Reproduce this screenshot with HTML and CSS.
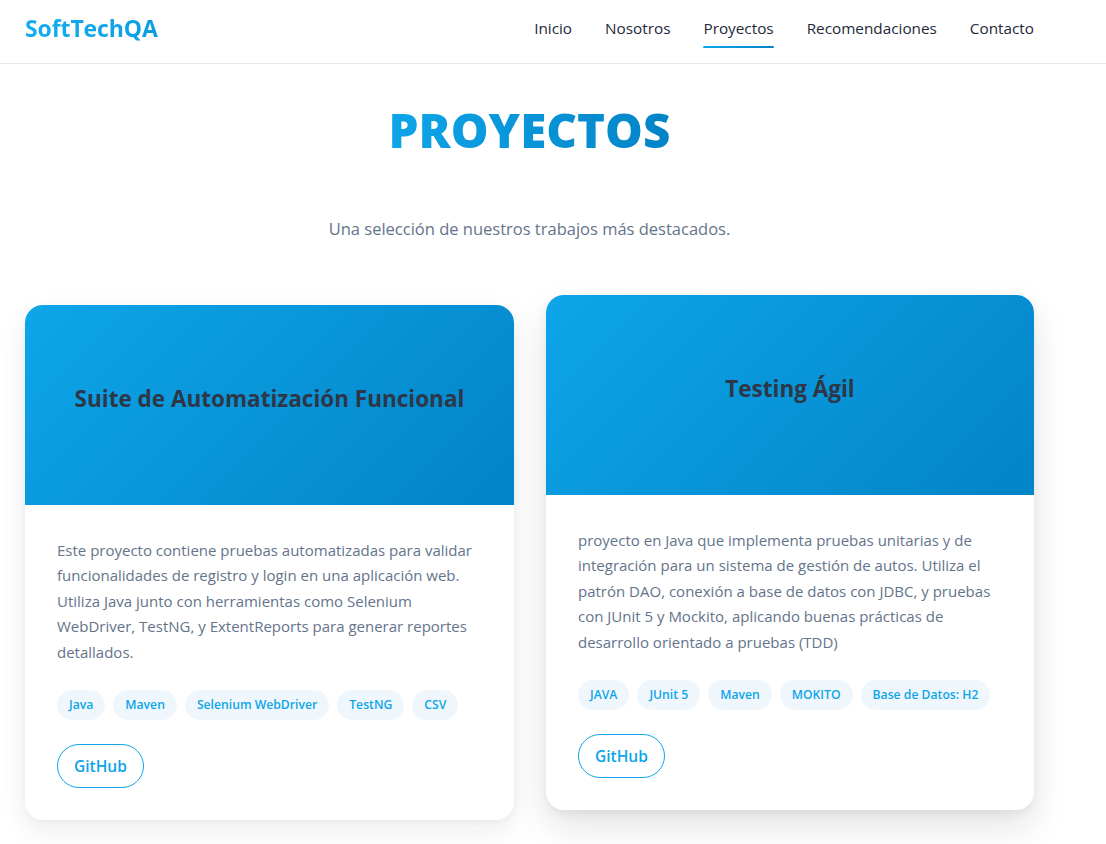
FILE: index.html
```html
<!DOCTYPE html>
<html lang="es">
<head>
<meta charset="utf-8">
<title>SoftTechQA - Proyectos</title>
<link rel="stylesheet" href="styles.css">
</head>
<body>
<header class="site-header">
  <div class="container header-inner">
    <a class="logo" href="#">SoftTechQA</a>
    <nav class="nav">
      <a href="#">Inicio</a>
      <a href="#">Nosotros</a>
      <a href="#" class="active">Proyectos</a>
      <a href="#">Recomendaciones</a>
      <a href="#">Contacto</a>
    </nav>
  </div>
</header>
<main class="container projects">
  <h1 class="section-title">PROYECTOS</h1>
  <p class="section-subtitle">Una selección de nuestros trabajos más destacados.</p>
  <div class="grid">
    <article class="card">
      <div class="card-head"><h3>Suite de Automatización Funcional</h3></div>
      <div class="card-body">
        <p>Este proyecto contiene pruebas automatizadas para validar funcionalidades de registro y login en una aplicación web. Utiliza Java junto con herramientas como Selenium WebDriver, TestNG, y ExtentReports para generar reportes detallados.</p>
        <ul class="tags">
          <li>Java</li><li>Maven</li><li>Selenium WebDriver</li><li>TestNG</li><li>CSV</li>
        </ul>
        <a href="#" class="btn">GitHub</a>
      </div>
    </article>
    <article class="card card-raised">
      <div class="card-head"><h3>Testing Ágil</h3></div>
      <div class="card-body">
        <p>proyecto en Java que implementa pruebas unitarias y de integración para un sistema de gestión de autos. Utiliza el patrón DAO, conexión a base de datos con JDBC, y pruebas con JUnit 5 y Mockito, aplicando buenas prácticas de desarrollo orientado a pruebas (TDD)</p>
        <ul class="tags">
          <li>JAVA</li><li>JUnit 5</li><li>Maven</li><li>MOKITO</li><li>Base de Datos: H2</li>
        </ul>
        <a href="#" class="btn">GitHub</a>
      </div>
    </article>
  </div>
</main>
</body>
</html>
```
FILE: styles.css
```css
* { box-sizing: border-box; }
html, body { margin: 0; padding: 0; }
body {
  font-family: "Open Sans", "Noto Sans", sans-serif;
  background: #ffffff;
  color: #1e293b;
}
.container {
  width: 1009px;
  margin-left: 25px;
}
.site-header {
  border-bottom: 1px solid #e5e7eb;
  height: 64px;
}
.header-inner {
  height: 63px;
  padding-bottom: 7px;
  display: flex;
  align-items: center;
  justify-content: space-between;
}
.logo {
  font-size: 23px;
  font-weight: 700;
  text-decoration: none;
  color: #0ea5e9;
  background: linear-gradient(90deg, #14aef0, #0a9ee3);
  -webkit-background-clip: text;
  background-clip: text;
  -webkit-text-fill-color: transparent;
  letter-spacing: -0.1px;
}
.nav {
  display: flex;
  gap: 33px;
}
.nav a {
  position: relative;
  font-size: 15.3px;
  font-weight: 500;
  color: #1e293b;
  text-decoration: none;
  padding: 4px 0;
}
.nav a.active::after {
  content: "";
  position: absolute;
  left: 0;
  right: 0;
  bottom: -6px;
  height: 2px;
  border-radius: 1px;
  background: linear-gradient(90deg, #0ea5e9, #0284c7);
}
.projects {
  text-align: center;
}
.section-title {
  margin: 35px 0 0;
  font-size: 47.5px;
  font-weight: 800;
  line-height: 1.3;
  color: #0ea5e9;
  background: linear-gradient(90deg, #0ea5e9, #0284c7);
  -webkit-background-clip: text;
  background-clip: text;
  -webkit-text-fill-color: transparent;
  display: inline-block;
}
.section-subtitle {
  margin: 56px 0 0;
  font-size: 16.5px;
  color: #64748b;
  line-height: 24px;
}
.grid {
  margin-top: 64px;
  display: grid;
  grid-template-columns: 489px 488px;
  column-gap: 32px;
  align-items: start;
  text-align: left;
  padding-bottom: 40px;
}
.card {
  background: #fff;
  border-radius: 18px;
  overflow: hidden;
  box-shadow: 0 10px 28px rgba(15, 23, 42, 0.08), 0 2px 6px rgba(15, 23, 42, 0.04);
}
.card-raised {
  transform: translateY(-10px);
  box-shadow: 0 16px 34px rgba(15, 23, 42, 0.12), 0 4px 10px rgba(15, 23, 42, 0.05);
}
.card-head {
  height: 200px;
  display: flex;
  align-items: center;
  justify-content: center;
  padding-bottom: 12px;
  background: linear-gradient(135deg, #0ea5e9 0%, #0284c7 100%);
}
.card-head h3 {
  margin: 0;
  font-size: 22.5px;
  font-weight: 700;
  color: #2d3748;
  text-align: center;
}
.card-body {
  padding: 33px 32px 32px;
}
.card-body p {
  margin: 0;
  font-size: 15px;
  line-height: 25.5px;
  color: #64748b;
}
.tags {
  list-style: none;
  margin: 25px 0 0;
  padding: 0;
  display: flex;
  flex-wrap: wrap;
  gap: 8px;
}
.tags li {
  background: #f0f7fc;
  color: #0ea5e9;
  font-size: 12.2px;
  font-weight: 600;
  height: 30px;
  line-height: 30px;
  padding: 0 12px;
  border-radius: 15px;
}
.btn {
  display: inline-flex;
  align-items: center;
  justify-content: center;
  margin-top: 24px;
  height: 44px;
  padding: 0 16px;
  border: 1.5px solid #0ea5e9;
  border-radius: 22px;
  color: #0ea5e9;
  font-size: 15.5px;
  font-weight: 600;
  text-decoration: none;
}
```
